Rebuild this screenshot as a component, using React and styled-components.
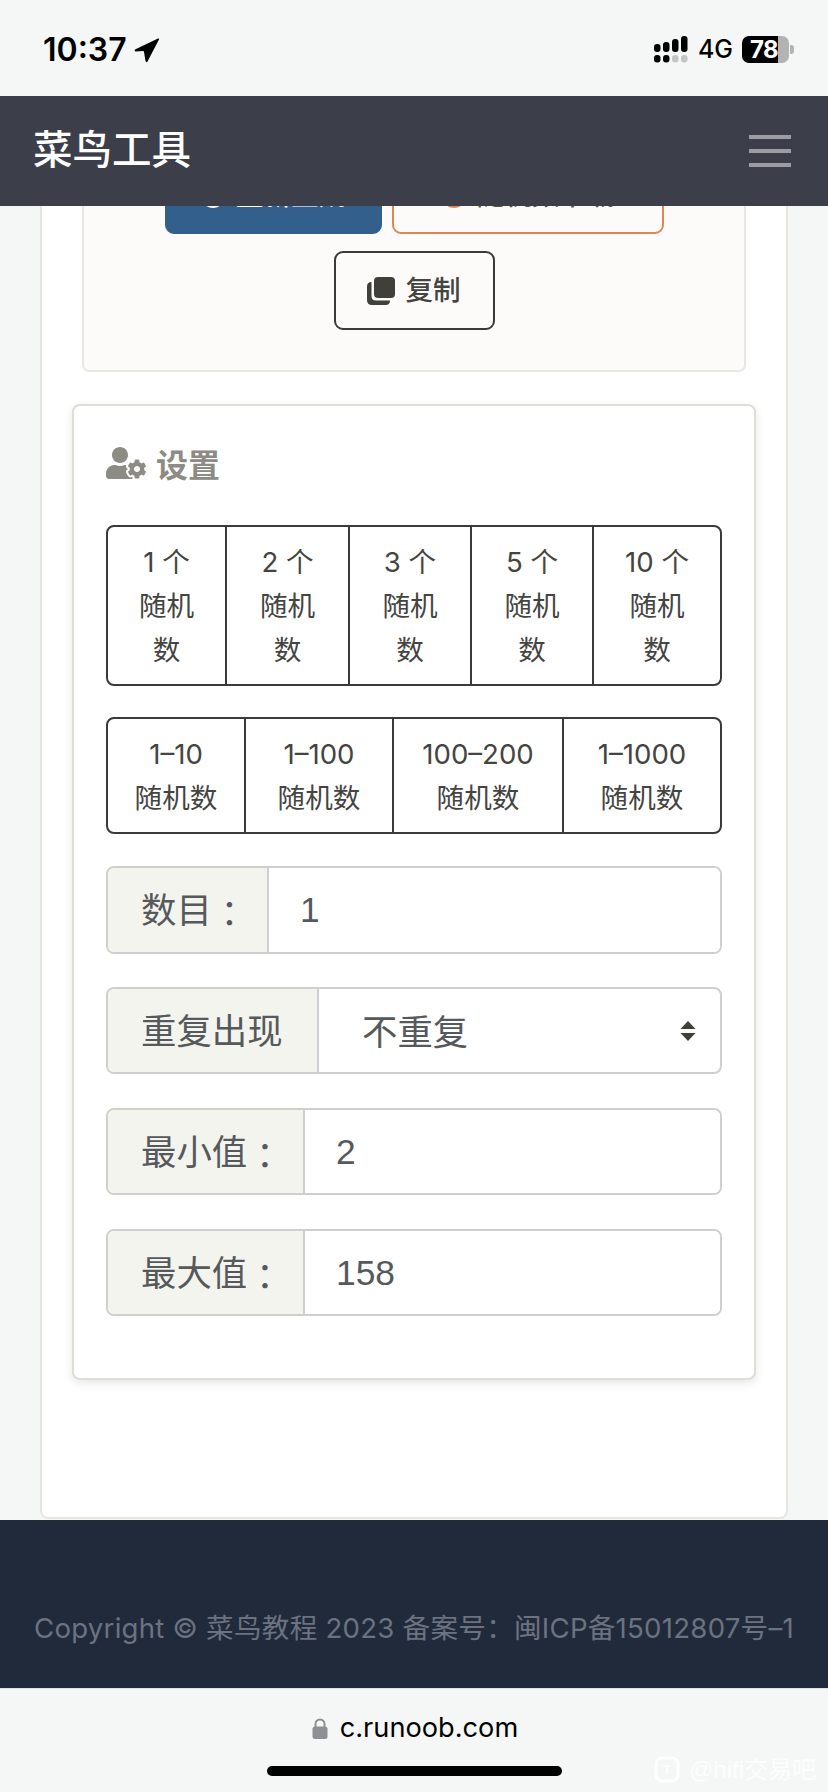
import React from 'react'
import styled, { createGlobalStyle } from 'styled-components'
import { FaUserCog } from 'react-icons/fa'

const SANS = `"Liberation Sans", "Noto Sans CJK SC", sans-serif`
const UI = `Inter, "Noto Sans CJK SC", sans-serif`

const GlobalStyle = createGlobalStyle`
  html, body { margin: 0; padding: 0; background: #f5f7f6; }
  body { font-family: ${SANS}; }
  * { box-sizing: border-box; }
`

const Phone = styled.div`
  position: relative;
  width: 828px;
  height: 1792px;
  overflow: hidden;
  display: flex;
  flex-direction: column;
`

// iOS status bar
const StatusBar = styled.div`
  height: 96px;
  flex: none;
  display: flex;
  align-items: center;
  justify-content: space-between;
  padding: 3px 34px 0 43px;
  background: #f5f7f6;
  color: #000;
`
const Clock = styled.div`
  display: flex;
  align-items: center;
  gap: 7px;
  font: 600 32px/1 Inter, sans-serif;
`
const StatusRight = styled.div`
  display: flex;
  align-items: center;
`
const Network = styled.span`
  margin: 0 9px 0 10px;
  font: 500 25px/1 Inter, sans-serif;
`
const Battery = styled.div`
  width: 47px;
  height: 27px;
  border-radius: 7px;
  display: flex;
  align-items: center;
  padding-left: 8px;
  background: linear-gradient(90deg, #000 77%, #b3b3b3 77%);
  color: #fff;
  font: 700 24px/1 Inter, sans-serif;
  letter-spacing: -0.5px;
`
const BatteryTip = styled.div`
  width: 4px;
  height: 9px;
  margin-left: 1px;
  border-radius: 0 3px 3px 0;
  background: #b3b3b3;
`

const NavBar = styled.nav`
  height: 110px;
  flex: none;
  position: relative;
  z-index: 2;
  display: flex;
  align-items: center;
  justify-content: space-between;
  padding: 0 37px 0 33px;
  background: #3c3e4a;
`
const Brand = styled.div`
  color: #fff;
  font-size: 39.5px;
  font-weight: 500;
  line-height: 1;
`

// Scrolled page: anchored to the bottom, the top of it slides under the nav
const Main = styled.main`
  flex: none;
  height: 1314px;
  overflow: hidden;
  display: flex;
  flex-direction: column;
  justify-content: flex-end;
`
const OuterCard = styled.section`
  flex: none;
  margin: 0 40px 1px;
  padding: 0 33px 137px;
  background: #fff;
  border: 2px solid #e7e5df;
  border-top: 0;
  border-radius: 8px;
`
const ResultPanel = styled.div`
  margin: 0 7px 32px;
  padding-bottom: 40px;
  background: #fdfbf9;
  border: 2px solid #e9e7e1;
  border-top: 0;
  border-radius: 7px;
  display: flex;
  flex-direction: column;
  align-items: center;
  gap: 17px;
`
const ActionRow = styled.div`
  display: flex;
  gap: 10px;
`
const ActionButton = styled.button`
  width: ${p => p.$w}px;
  height: 79px;
  border-radius: 9px;
  border: 2px solid ${p => p.$border};
  background: ${p => p.$bg};
  color: ${p => p.$color};
  display: flex;
  align-items: center;
  justify-content: center;
  gap: 10px;
  padding: ${p => p.$top || 0}px 0 0;
  font: 500 27.6px/1.5 ${SANS};
`
const CopyButton = styled(ActionButton)`
  width: 161px;
`

const SettingsCard = styled.section`
  margin: 0 0 0 -3px;
  width: 684px;
  padding: 39px 32px 62px;
  background: #fff;
  border: 2px solid #dfddd6;
  border-radius: 8px;
  box-shadow: 0 3px 10px rgba(0, 0, 0, 0.1);
`
const SettingsTitle = styled.h4`
  margin: 0 0 44px;
  display: flex;
  align-items: center;
  gap: 10px;
  height: 36px;
  color: #8c8c85;
  font-size: 32px;
  font-weight: 700;
`
const ButtonGroup = styled.div`
  display: flex;
  margin-bottom: 31px;
  border: 2px solid #3a3a3a;
  border-radius: 8px;
  overflow: hidden;
  & + & { margin-bottom: 32px; }
`
const GroupButton = styled.div`
  width: ${p => p.$w}px;
  flex: none;
  padding: 13px 0 12px;
  text-align: center;
  color: #444441;
  font: 27.6px/44px ${UI};
  & + & { border-left: 2px solid #3a3a3a; }
`
const GroupLine = styled.span`
  display: block;
`

const InputGroup = styled.div`
  height: 87.5px;
  display: flex;
  margin-bottom: 33.3px;
  border: 2px solid #cfcfcd;
  border-radius: 8px;
  overflow: hidden;
  &:last-child { margin-bottom: 0; }
`
const Addon = styled.div`
  width: ${p => p.$w}px;
  flex: none;
  display: flex;
  align-items: center;
  padding: 4px 0 0 33px;
  background: #f4f4ef;
  border-right: 2px solid #cfcfcd;
  color: #55595c;
  font-size: 35.4px;
  line-height: 1;
  white-space: nowrap;
`
// fullwidth colon sits in the middle of its box
const Colon = styled.span`
  font-family: "Noto Sans CJK TC", sans-serif;
`
const NumberInput = styled.input`
  flex: 1;
  min-width: 0;
  border: 0;
  outline: 0;
  padding: 2px 31px 0;
  background: #fff;
  color: #55595c;
  font: 35.4px ${SANS};
`
const SelectBox = styled.div`
  flex: 1;
  display: flex;
  align-items: center;
  padding-right: 24px;
`
const Select = styled.select`
  flex: 1;
  appearance: none;
  border: 0;
  outline: 0;
  padding: 4px 0 0 43px;
  background: transparent;
  color: #55595c;
  font: 35.4px ${SANS};
`

const Footer = styled.footer`
  height: 168px;
  flex: none;
  padding-top: 90px;
  background: #212a3b;
  color: #6b7280;
  font: 27.6px/36px ${UI};
  letter-spacing: 0.25px;
  text-align: center;
  white-space: nowrap;
`

const AddressBar = styled.div`
  flex: 1;
  display: flex;
  flex-direction: column;
  align-items: center;
  padding-top: 21px;
  background: #f5f7f6;
  border-top: 1px solid #dde1e6;
`
const Url = styled.div`
  display: flex;
  align-items: center;
  gap: 12px;
  padding-left: 2px;
  color: #000;
  font: 27.2px/36px Inter, sans-serif;
`
const HomeBar = styled.div`
  width: 295px;
  height: 10px;
  margin-top: 20px;
  border-radius: 5px;
  background: #000;
`
const Watermark = styled.div`
  position: absolute;
  right: 12px;
  bottom: 9px;
  display: flex;
  align-items: center;
  gap: 9px;
  color: rgba(255, 255, 255, 0.75);
  font-size: 24px;
  line-height: 1;
`

const LocationArrow = () => (
  <svg width="26" height="26" viewBox="0 0 26 26">
    <path d="M1 12.5 L24 1.5 Q25.5 1 25 2.5 L13.5 24.5 Q12.5 26 11.5 24 L10 15 Q10 14.2 9 14 L1.5 14.5 Q0 14 1 12.5 Z" fill="#000" />
  </svg>
)

const Signal = () => (
  <svg width="34" height="27" viewBox="0 0 34 27">
    <rect x="0" y="8" width="6.5" height="8" rx="3" fill="#000" />
    <rect x="9" y="6" width="6.5" height="10" rx="3" fill="#000" />
    <rect x="18" y="3" width="6.5" height="13" rx="3" fill="#000" />
    <rect x="27" y="0" width="6.5" height="16" rx="3" fill="#000" />
    <rect x="0" y="19" width="6.5" height="7.5" rx="3" fill="#000" />
    <rect x="9" y="19" width="6.5" height="7.5" rx="3" fill="#000" />
    <rect x="18" y="19" width="6.5" height="7.5" rx="3" fill="#c4c4c4" />
    <rect x="27" y="19" width="6.5" height="7.5" rx="3" fill="#c4c4c4" />
  </svg>
)

const Hamburger = () => (
  <svg width="42" height="32" viewBox="0 0 42 32">
    <rect y="0" width="42" height="4" fill="#9c9da3" />
    <rect y="14" width="42" height="4" fill="#9c9da3" />
    <rect y="28" width="42" height="4" fill="#9c9da3" />
  </svg>
)

const CopyIcon = () => (
  <svg width="28" height="28" viewBox="0 0 28 28">
    <rect x="7" y="0" width="21" height="21" rx="4" fill="#3f403a" />
    <path d="M4.5 5 L4.5 19 Q4.5 23.5 9 23.5 L23 23.5 Q23 28 18.5 28 L5 28 Q0 28 0 23 L0 9.5 Q0 5 4.5 5 Z" fill="#3f403a" />
  </svg>
)

const SpinIcon = ({ color }) => (
  <svg width="26" height="26" viewBox="0 0 26 26">
    <circle cx="13" cy="13" r="10" fill="none" stroke={color} strokeWidth="4" />
  </svg>
)

const SortArrows = () => (
  <svg width="16" height="20" viewBox="0 0 16 20">
    <path d="M8 0 L15.5 8 L0.5 8 Z M0.5 12 L15.5 12 L8 20 Z" fill="#3f403a" />
  </svg>
)

const LockIcon = () => (
  <svg width="16" height="21" viewBox="0 0 16 21">
    <path d="M3.5 9 V6 a4.5 4.5 0 0 1 9 0 V9" fill="none" stroke="#8e8e93" strokeWidth="2" />
    <rect x="0.5" y="8.5" width="15" height="12.5" rx="2.5" fill="#8e8e93" />
  </svg>
)

const WatermarkLogo = () => (
  <svg width="26" height="27" viewBox="0 0 26 27">
    <rect x="2" y="2" width="22" height="23" rx="6" fill="none" stroke="rgba(255,255,255,.8)" strokeWidth="3" />
    <path d="M9 10 h8 M13 10 v8" stroke="rgba(255,255,255,.6)" strokeWidth="2" />
  </svg>
)

const countButtons = [
  { lines: ['1 个', '随机', '数'], w: 117 },
  { lines: ['2 个', '随机', '数'], w: 123 },
  { lines: ['3 个', '随机', '数'], w: 122 },
  { lines: ['5 个', '随机', '数'], w: 122 },
  { lines: ['10 个', '随机', '数'], w: 128 },
]

const rangeButtons = [
  { lines: ['1–10', '随机数'], w: 136 },
  { lines: ['1–100', '随机数'], w: 148 },
  { lines: ['100–200', '随机数'], w: 170 },
  { lines: ['1–1000', '随机数'], w: 158 },
]

const ButtonRow = ({ items }) => (
  <ButtonGroup>
    {items.map(b => (
      <GroupButton key={b.lines[0]} $w={b.w}>
        {b.lines.map(line => <GroupLine key={line}>{line}</GroupLine>)}
      </GroupButton>
    ))}
  </ButtonGroup>
)

export default function App() {
  return (
    <Phone>
      <GlobalStyle />
      <StatusBar>
        <Clock>10:37 <LocationArrow /></Clock>
        <StatusRight>
          <Signal />
          <Network>4G</Network>
          <Battery>78</Battery>
          <BatteryTip />
        </StatusRight>
      </StatusBar>

      <NavBar>
        <Brand>菜鸟工具</Brand>
        <Hamburger />
      </NavBar>

      <Main>
        <OuterCard>
          <ResultPanel>
            <ActionRow>
              <ActionButton $w={217} $top={2} $bg="#335f8c" $border="#335f8c" $color="#fff">
                <SpinIcon color="#fff" />重新生成
              </ActionButton>
              <ActionButton $w={272} $top={2} $bg="transparent" $border="#e0854f" $color="#55504a">
                <SpinIcon color="#e0854f" />随机数下载
              </ActionButton>
            </ActionRow>
            <CopyButton $bg="transparent" $border="#3a3a3a" $color="#444441">
              <CopyIcon />复制
            </CopyButton>
          </ResultPanel>

          <SettingsCard>
            <SettingsTitle><FaUserCog size={40} color="#8c8c85" />设置</SettingsTitle>
            <ButtonRow items={countButtons} />
            <ButtonRow items={rangeButtons} />
            <InputGroup>
              <Addon $w={161}>数目<Colon>：</Colon></Addon>
              <NumberInput readOnly value="1" />
            </InputGroup>
            <InputGroup>
              <Addon $w={211}>重复出现</Addon>
              <SelectBox>
                <Select defaultValue="0">
                  <option value="0">不重复</option>
                  <option value="1">可重复</option>
                </Select>
                <SortArrows />
              </SelectBox>
            </InputGroup>
            <InputGroup>
              <Addon $w={197}>最小值<Colon>：</Colon></Addon>
              <NumberInput readOnly value="2" />
            </InputGroup>
            <InputGroup>
              <Addon $w={197}>最大值<Colon>：</Colon></Addon>
              <NumberInput readOnly value="158" />
            </InputGroup>
          </SettingsCard>
        </OuterCard>
      </Main>

      <Footer>Copyright © 菜鸟教程 2023 备案号：闽ICP备15012807号–1</Footer>

      <AddressBar>
        <Url><LockIcon />c.runoob.com</Url>
        <HomeBar />
      </AddressBar>

      <Watermark><WatermarkLogo />@hifi交易吧</Watermark>
    </Phone>
  )
}
